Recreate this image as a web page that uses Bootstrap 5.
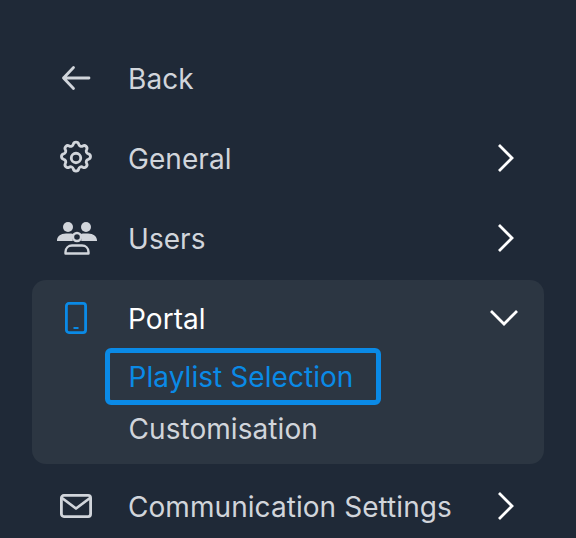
<!DOCTYPE html>
<html lang="en">
<head>
<meta charset="utf-8">
<title>Menu</title>
<link href="https://cdn.jsdelivr.net/npm/bootstrap@5.3.0/dist/css/bootstrap.min.css" rel="stylesheet">
<style>
html,body{height:100%;}
body{background:#1f2937;font-family:"Inter","Liberation Sans",sans-serif;overflow:hidden;}
.side-nav{padding:38px 32px 0;}
.side-row{height:80px;color:#d1d5db;font-size:28px;line-height:32px;padding:0 24px;text-decoration:none;}
.side-lbl{margin-top:1px;letter-spacing:.06px;}
.side-ico{width:40px;flex:none;margin-right:32px;}
.side-ico svg,.side-chev svg{display:block;margin:0 auto;}
.side-chev{margin-left:auto;width:32px;margin-right:-2px;color:#fff;}
.side-open{background:#2c3642;border-radius:14px;height:184px;margin:2px 0 2px;}
.side-open .side-row{height:76px;color:#fff;}
.side-open .side-ico{color:#0a8ae6;}
.side-open .side-chev{margin-right:0;}
.side-sub{display:block;width:fit-content;margin-left:73px;height:57px;line-height:48px;padding:0 23px 0 18.500px;border:5px solid #0a8ae6;border-radius:6px;color:#0a8ae6;font-size:28px;letter-spacing:.06px;text-decoration:none;margin-top:-8px;}
.side-sub2{display:block;margin-left:96.500px;margin-top:8px;line-height:32px;color:#d1d5db;font-size:28px;letter-spacing:.06px;text-decoration:none;}
</style>
</head>
<body>
<nav class="side-nav d-flex flex-column">
  <a href="#" class="side-row d-flex align-items-center">
    <span class="side-ico"><svg width="32" height="32" viewBox="0 0 32 32" fill="none" stroke="currentColor" stroke-width="2.8" stroke-linecap="round" stroke-linejoin="round"><path d="M29 16H3.500M13.500 5.500 3.500 16l10 10.500"/></svg></span>
    <span class="side-lbl">Back</span>
  </a>
  <a href="#" class="side-row d-flex align-items-center">
    <span class="side-ico"><svg width="38" height="38" viewBox="0 0 24 24" fill="none" stroke="currentColor" stroke-width="1.800" stroke-linecap="round" stroke-linejoin="round"><path d="M10.300 3.300c.4-1.800 3-1.800 3.400 0a1.750 1.750 0 0 0 2.600 1.100c1.500-.9 3.300.8 2.400 2.400a1.750 1.750 0 0 0 1.100 2.600c1.800.4 1.800 3 0 3.400a1.750 1.750 0 0 0-1.100 2.600c.9 1.500-.8 3.300-2.400 2.400a1.750 1.750 0 0 0-2.600 1.100c-.4 1.800-3 1.800-3.400 0a1.750 1.750 0 0 0-2.600-1.100c-1.500.9-3.300-.8-2.400-2.400a1.750 1.750 0 0 0-1.100-2.600c-1.800-.4-1.800-3 0-3.400a1.750 1.750 0 0 0 1.100-2.600c-.9-1.500.8-3.300 2.400-2.400a1.750 1.750 0 0 0 2.600-1.100z"/><circle cx="12" cy="12" r="3"/></svg></span>
    <span class="side-lbl">General</span>
    <span class="side-chev"><svg width="20" height="30" viewBox="0 0 20 30" fill="none" stroke="currentColor" stroke-width="2.800"><path d="M3 2l13 13L3 28"/></svg></span>
  </a>
  <a href="#" class="side-row d-flex align-items-center">
    <span class="side-ico"><svg width="42" height="34" viewBox="0 0 42 34" fill="#d1d5db" stroke="none"><circle cx="12" cy="6" r="5"/><circle cx="30" cy="6" r="5"/><path d="M1 20v-.500c0-4 3.500-7 9-7h4c1.500 0 3 .4 4 1a8 8 0 0 0-1.200 6.500zM41 20v-.500c0-4-3.500-7-9-7h-4c-1.500 0-3 .4-4 1a8 8 0 0 1 1.200 6.500z"/><circle cx="21" cy="16" r="4" fill="none" stroke="#d1d5db" stroke-width="2.400"/><path d="M9.500 32.500v-1.500c0-4 3-6.500 6.500-6.500h10c3.500 0 6.500 2.500 6.500 6.500v1.500z" fill="none" stroke="#d1d5db" stroke-width="2.400" stroke-linejoin="round"/></svg></span>
    <span class="side-lbl">Users</span>
    <span class="side-chev"><svg width="20" height="30" viewBox="0 0 20 30" fill="none" stroke="currentColor" stroke-width="2.800"><path d="M3 2l13 13L3 28"/></svg></span>
  </a>
  <div class="side-open">
    <a href="#" class="side-row d-flex align-items-center">
      <span class="side-ico"><svg width="22" height="32" viewBox="0 0 22 32" fill="none" stroke="currentColor" stroke-width="2.800" stroke-linejoin="round"><rect x="1.400" y="1.400" width="19.200" height="29.200" rx="2.500"/><path d="M8.500 26h5" stroke-width="2"/></svg></span>
      <span class="side-lbl">Portal</span>
      <span class="side-chev"><svg width="30" height="20" viewBox="0 0 30 20" fill="none" stroke="currentColor" stroke-width="2.800"><path d="M2 3l13 13L28 3"/></svg></span>
    </a>
    <a href="#" class="side-sub">Playlist Selection</a>
    <a href="#" class="side-sub2">Customisation</a>
  </div>
  <a href="#" class="side-row d-flex align-items-center">
    <span class="side-ico"><svg width="32" height="24" viewBox="0 0 32 24" fill="none" stroke="currentColor" stroke-width="2.800" stroke-linejoin="round" stroke-linecap="round"><rect x="1.400" y="1.400" width="29.200" height="21.200" rx="2.500"/><path d="M2 4 16 14.500 30 4"/></svg></span>
    <span class="side-lbl">Communication Settings</span>
    <span class="side-chev"><svg width="20" height="30" viewBox="0 0 20 30" fill="none" stroke="currentColor" stroke-width="2.800"><path d="M3 2l13 13L3 28"/></svg></span>
  </a>
</nav>
<script src="https://cdn.jsdelivr.net/npm/bootstrap@5.3.0/dist/js/bootstrap.bundle.min.js"></script>
</body>
</html>
